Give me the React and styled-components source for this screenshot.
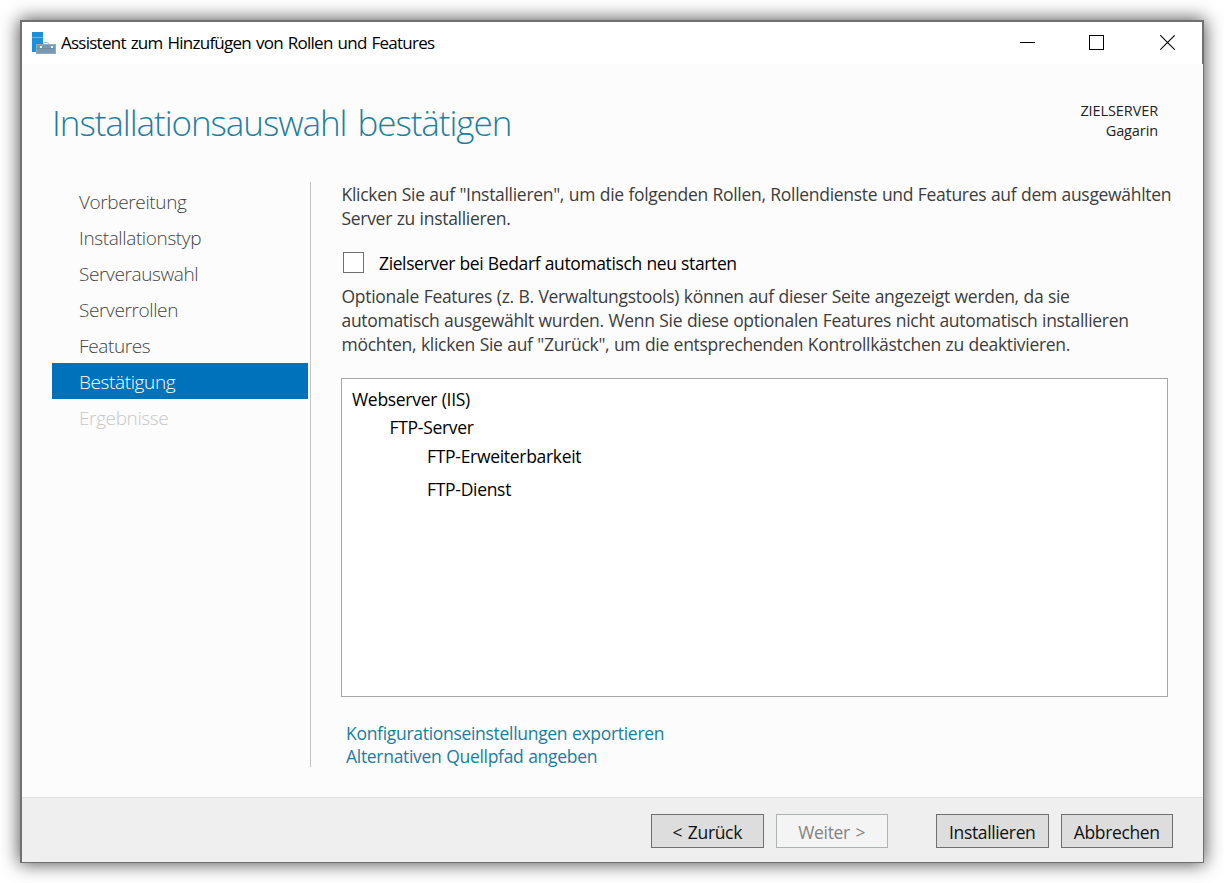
import styled, { createGlobalStyle } from 'styled-components';

const steps = [
  { label: 'Vorbereitung' },
  { label: 'Installationstyp' },
  { label: 'Serverauswahl' },
  { label: 'Serverrollen' },
  { label: 'Features' },
  { label: 'Bestätigung', active: true },
  { label: 'Ergebnisse', disabled: true },
];

const features = [
  { label: 'Webserver (IIS)', level: 0, height: 28 },
  { label: 'FTP-Server', level: 1, height: 28 },
  { label: 'FTP-Erweiterbarkeit', level: 2, height: 30 },
  { label: 'FTP-Dienst', level: 2, height: 36 },
];

export default function App() {
  return (
    <Screen>
      <GlobalStyle />
      <Window>
        <TitleBar>
          <ServerIcon />
          <WindowTitle>Assistent zum Hinzufügen von Rollen und Features</WindowTitle>
          <WindowControls />
        </TitleBar>
        <Body>
          <Header>
            <PageTitle>Installationsauswahl bestätigen</PageTitle>
            <Target>
              <div>ZIELSERVER</div>
              <div>Gagarin</div>
            </Target>
          </Header>
          <Columns>
            <Sidebar>
              {steps.map((step) => (
                <Step key={step.label} $active={step.active} $disabled={step.disabled}>
                  {step.label}
                </Step>
              ))}
            </Sidebar>
            <Content>
              <Paragraph>
                <Line>Klicken Sie auf "Installieren", um die folgenden Rollen, Rollendienste und Features auf dem ausgewählten</Line>
                <Line>Server zu installieren.</Line>
              </Paragraph>
              <RestartOption>
                <Checkbox type="checkbox" />
                <RestartLabel>Zielserver bei Bedarf automatisch neu starten</RestartLabel>
              </RestartOption>
              <Paragraph>
                <Line>Optionale Features (z. B. Verwaltungstools) können auf dieser Seite angezeigt werden, da sie</Line>
                <Line>automatisch ausgewählt wurden. Wenn Sie diese optionalen Features nicht automatisch installieren</Line>
                <Line>möchten, klicken Sie auf "Zurück", um die entsprechenden Kontrollkästchen zu deaktivieren.</Line>
              </Paragraph>
              <FeatureList>
                {features.map((item) => (
                  <FeatureItem key={item.label} $level={item.level} $height={item.height}>
                    {item.label}
                  </FeatureItem>
                ))}
              </FeatureList>
              <Links>
                <Link>Konfigurationseinstellungen exportieren</Link>
                <Link>Alternativen Quellpfad angeben</Link>
              </Links>
            </Content>
          </Columns>
        </Body>
        <Footer>
          <ButtonPair>
            <Button>&lt; Zurück</Button>
            <Button disabled>Weiter &gt;</Button>
          </ButtonPair>
          <ButtonPair>
            <Button>Installieren</Button>
            <Button>Abbrechen</Button>
          </ButtonPair>
        </Footer>
      </Window>
    </Screen>
  );
}

function ServerIcon() {
  return (
    <Icon width="24" height="22" viewBox="0 0 24 22">
      <rect x="0" y="0" width="11" height="20" fill="#1e8fdb" />
      <rect x="0" y="5" width="11" height="1" fill="#63b8ee" />
      <path d="M11.5 13v-1.5q0-1 1-1h3q1 0 1 1V13" fill="none" stroke="#a9b8c4" />
      <rect x="4.5" y="12.5" width="19" height="9" fill="#7a98ae" stroke="#93abbd" />
      <rect x="5" y="16" width="18" height="1" fill="#6f8ca4" />
      <rect x="8" y="14" width="2" height="2" fill="#f4f7f9" />
      <rect x="19" y="14" width="2" height="2" fill="#f4f7f9" />
    </Icon>
  );
}

function WindowControls() {
  return (
    <Controls>
      <svg width="16" height="16" viewBox="0 0 16 16" shapeRendering="crispEdges">
        <path d="M0 7.5h15" stroke="#000" />
      </svg>
      <svg width="16" height="16" viewBox="0 0 16 16" shapeRendering="crispEdges">
        <rect x="0.5" y="0.5" width="14" height="14" fill="none" stroke="#000" />
      </svg>
      <svg width="16" height="16" viewBox="0 0 16 16">
        <path d="M0.3 0.3l14.4 14.4M14.7 0.3L0.3 14.7" stroke="#000" strokeWidth="1.1" />
      </svg>
    </Controls>
  );
}

const GlobalStyle = createGlobalStyle`
  * {
    box-sizing: border-box;
  }

  body {
    margin: 0;
    background: #fff;
    font-family: 'Open Sans', 'Noto Sans', sans-serif;
    font-size: 17.5px;
    letter-spacing: -0.3px;
    word-spacing: 0.4px;
    color: #3c3c3c;
  }
`;

const Screen = styled.div`
  height: 883px;
  padding: 20px;
  overflow: hidden;
`;

const Window = styled.div`
  width: 1184px;
  height: 843px;
  display: flex;
  flex-direction: column;
  border: 2px solid #707070;
  border-right-width: 1px;
  border-bottom-width: 1px;
  box-shadow: 0 0 17px 1px rgba(0, 0, 0, 0.68);
`;

const TitleBar = styled.div`
  height: 42px;
  flex: none;
  display: flex;
  align-items: center;
  padding-left: 10px;
  background: #fff;
  border-right: 1px solid #707070;
`;

const Icon = styled.svg`
  flex: none;
  margin-right: 5px;
`;

const WindowTitle = styled.div`
  font-size: 17px;
  line-height: 24px;
  padding-bottom: 1px;
  color: #000;
  white-space: nowrap;
  letter-spacing: -0.75px;
  word-spacing: 1.3px;
`;

const Controls = styled.div`
  display: flex;
  gap: 54px;
  margin-left: auto;
  padding-right: 26px;

  svg:nth-child(2) {
    margin: 0 1px 0 -1px;
  }
`;

const Body = styled.div`
  flex: 1;
  background: #fcfcfc;
`;

const Header = styled.div`
  height: 118px;
  display: flex;
  justify-content: space-between;
  padding: 32px 45px 0 30px;
`;

const PageTitle = styled.h1`
  margin: 0;
  font-size: 35px;
  line-height: 54px;
  font-weight: 300;
  letter-spacing: -1.05px;
  word-spacing: 3px;
  color: #1e7fa0;
  white-space: nowrap;
`;

const Target = styled.div`
  padding-top: 5px;
  text-align: right;
  font-size: 14.5px;
  line-height: 20px;
  letter-spacing: -0.1px;
  color: #222;
`;

const Columns = styled.div`
  display: flex;
  height: 585px;
`;

const Sidebar = styled.div`
  width: 289px;
  flex: none;
  padding: 1px 2px 0 30px;
  border-right: 1px solid #c3c3c3;
`;

const Step = styled.div`
  height: 36px;
  padding: 1px 0 0 27px;
  line-height: 37px;
  font-size: 19px;
  font-weight: 300;
  letter-spacing: -0.38px;
  color: ${props => (props.$active ? '#fff' : props.$disabled ? '#c8c8c8' : '#444')};
  background: ${props => (props.$active ? '#0072bc' : 'transparent')};
`;

const Content = styled.div`
  flex: 1;
  min-width: 0;
  padding: 1px 0 0 30px;
`;

const Paragraph = styled.div`
  line-height: 23.7px;
`;

const Line = styled.div`
  white-space: nowrap;
  padding-left: 0.5px;
`;

const RestartOption = styled.label`
  display: flex;
  align-items: center;
  height: 24px;
  margin: 20px 0 11px 2px;
  color: #000;
`;

const RestartLabel = styled.span`
  padding-top: 1px;
  letter-spacing: -0.38px;
`;

const Checkbox = styled.input`
  appearance: none;
  width: 21px;
  height: 21px;
  margin: 0 15px 0 0;
  background: #fff;
  border: 1px solid #707070;
`;

const FeatureList = styled.div`
  width: 827px;
  height: 319px;
  margin-top: 21px;
  padding: 6px 10px;
  background: #fff;
  border: 1px solid #a5a6aa;
  color: #000;
`;

const FeatureItem = styled.div`
  height: ${props => props.$height}px;
  line-height: ${props => props.$height}px;
  padding-left: ${props => props.$level * 37.5}px;
`;

const Links = styled.div`
  display: flex;
  flex-direction: column;
  margin-top: 25px;
  padding-left: 5px;
`;

const Link = styled.a`
  line-height: 23.7px;
  color: #1b7da0;
  cursor: pointer;
`;

const Footer = styled.div`
  height: 65px;
  flex: none;
  display: flex;
  justify-content: flex-end;
  gap: 48px;
  padding: 16px 30px 0 0;
  background: #efefef;
  border-top: 1px solid #dfdfdf;
`;

const ButtonPair = styled.div`
  display: flex;
  gap: 12px;
`;

const Button = styled.button`
  width: 112.5px;
  height: 34px;
  padding: 1px 0 0;
  font-family: inherit;
  font-size: 17.5px;
  letter-spacing: -0.35px;
  word-spacing: 1.5px;
  color: #111;
  background: #ddd;
  border: 1px solid #707070;

  &:disabled {
    color: #838383;
    background: #f4f4f4;
    border-color: #adb2b5;
  }
`;
